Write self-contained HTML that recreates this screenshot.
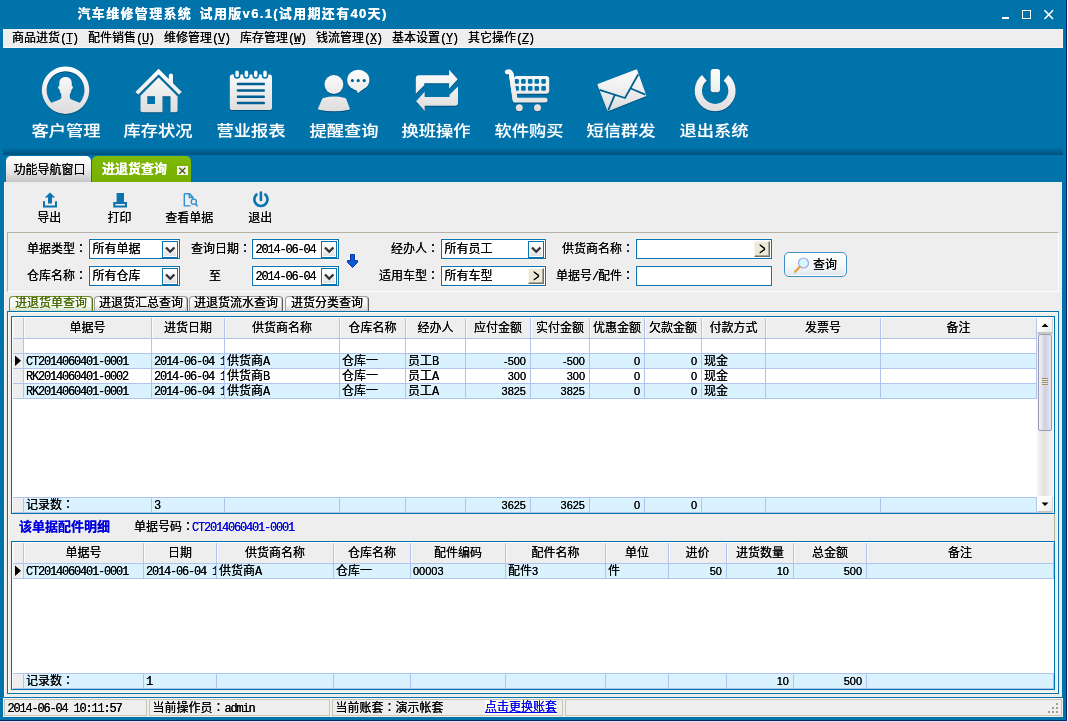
<!DOCTYPE html><html lang="zh-CN"><head><meta charset="utf-8"><title>汽车维修管理系统</title><style>
html,body{margin:0;padding:0}
body{width:1068px;height:722px;position:relative;overflow:hidden;background:#0073ab;will-change:transform;text-shadow:0 0 0 currentColor;
 font-family:"Liberation Sans","Noto Sans CJK SC",sans-serif;font-size:12px;line-height:14px;color:#000}
div,span,a{box-sizing:border-box}
.a{position:absolute;white-space:nowrap}
.l{font-family:"Liberation Mono",monospace;font-size:12px;letter-spacing:-1.2px}
.n{font-family:"Liberation Sans",sans-serif;font-size:11px}
.title{left:77.500px;top:5px;color:#fff;font-weight:bold;font-size:13px;line-height:18px;letter-spacing:1.33px;word-spacing:2.500px}
.menubar{left:3px;top:29px;width:1060px;height:19px;background:#eeeeee;box-shadow:inset -1px -1px 0 #fbf6f2}
.menubar span.mi{position:absolute;top:2px;line-height:14px}
.menubar u{text-decoration:underline}
.tbl{color:#fff;font-weight:500;font-size:15px;line-height:20px;width:104px;text-align:center;top:121px;transform:scaleX(1.15);text-shadow:0 0 1px rgba(210,235,250,.5)}
.shadow{left:3px;top:147px;width:1060px;height:8px;background:linear-gradient(to bottom,rgba(0,20,40,0) 0%,rgba(0,20,40,.06) 25%,rgba(0,20,40,.2) 60%,rgba(0,20,40,.36) 100%)}
.panel{left:4px;top:182px;width:1058px;height:515px;background:#eeeeee;border-left:1px solid #fbf7f3}
.tab1{left:6px;top:156px;width:85px;height:26px;border-radius:5px 5px 0 0;background:linear-gradient(#ffffff 10%,#e6e6e6 60%,#c6c6c6);text-align:center;line-height:29px;padding-left:2px}
.tab2{left:92px;top:156px;width:99px;height:26px;border-radius:5px 5px 0 0;background:linear-gradient(#80ba0a,#7ab600 30%,#78b000);color:#fff;font-weight:bold;font-size:13px;line-height:25px;padding-left:10px}
.tabx{left:177px;top:165.500px;width:10.700px;height:9.500px;background:#f3f3f1}
.sl{top:211px;line-height:14px;text-align:center}
.grp{left:7px;top:232px;width:1052px;height:60px;border:1px solid #fff;border-top-color:#b5b1a3;border-left-color:#b5b1a3}
.lab{line-height:14px;text-align:right}
.tc{font-family:"Liberation Sans","Noto Sans CJK TC",sans-serif}
.inp{height:20px;background:#fff;border:1px solid #0674b0;box-shadow:0 0 0 1px #f8f2ee}
.inp .t{position:absolute;left:2.5px;top:2px;line-height:14px}
.dd{position:absolute;right:1px;top:1px;width:16px;height:17px;border:1px solid #0674b0;box-shadow:inset 0 0 0 1px #fff;background:linear-gradient(#ffffff 15%,#e2e2e2 90%)}
.gt{position:absolute;right:1px;top:1px;width:16px;height:16px;background:#ece9d8;border:1px solid;border-color:#f8f6ee #716f64 #716f64 #f8f6ee;box-shadow:inset -1px -1px 0 #aca899;line-height:13px;text-align:center;font-size:15px;font-family:'Liberation Sans',sans-serif;color:#000}
.btn{left:784px;top:252px;width:63px;height:25px;border:1px solid #3c8ec4;border-radius:5px;background:linear-gradient(#ffffff,#f3f6f8 60%,#dfe8ee);box-shadow:inset 0 0 0 1px #fff}
.itab{top:296px;height:15px;border:1px solid #9c9c9c;border-right-color:#5c5c5c;border-bottom:none;border-radius:4px 4px 0 0;background:linear-gradient(#fff,#f6f6f6 55%,#d4d4d4);line-height:13px;text-align:center;box-shadow:inset -1px 0 0 #c8c8c8}
.itab.on{border-color:#6f9020;border-right-color:#557510;color:#456800;background:linear-gradient(#fff 25%,#f0f5ea 70%,#cfe0c4);box-shadow:inset -1px 0 0 #b5cc90}
.frame{left:7px;top:311px;width:1052px;height:383px;border:1px solid #0073ab;box-shadow:inset 1px 1px 0 0 #fdf9f5,inset -1px -1px 0 0 #fdf9f5;background:#eeeeee}
.grid{border:1px solid #0073ab;background:#fff;overflow:hidden}
.grid .wl{position:absolute;left:0;top:0;right:0;height:1px;background:#fff}
.c{position:absolute;border-right:1px solid #b1c4ef;border-bottom:1px solid #b1c4ef;overflow:hidden;white-space:nowrap;line-height:14px;padding:0 2px}
.h{background:#eeeeee;text-align:center;line-height:20px;padding:0;box-shadow:inset 1px 0 0 #fbfbfb}
.r{text-align:right;padding-right:4px}
.ind{background:#eeeeee}
.alt{background:#d9f2fd}
.f{border-top:1px solid #b1c4ef}
.sb{position:absolute;background:linear-gradient(to right,#f6f6f6,#e2e2e2 45%,#f4f4f4)}
.sbb{position:absolute;left:0;width:16px;height:16px;background:linear-gradient(135deg,#ffffff 20%,#ebebeb);border:1px solid;border-color:#fff #d4d4d4 #c4c4c4 #fff;box-shadow:0 1px 0 #c8c8c8}
.stat{left:3px;top:698px;width:1060px;height:19px;background:#eeeeee;border-top:1px solid #fbf9f5}
.sp{position:absolute;top:0px;height:17px;border:1px solid #c9c4b3;line-height:15px;padding:1px 0 0 2.5px;white-space:nowrap}
</style></head><body>
<div class="a title">汽车维修管理系统 试用版v6.1(试用期还有40天)</div>
<div class="a" style="left:1002px;top:17px;width:7px;height:2px;background:#fff"></div>
<div class="a" style="left:1022px;top:10px;width:9px;height:9px;border:1px solid #fff"></div>
<svg class="a" style="left:1043px;top:9px" width="12" height="11" viewBox="0 0 12 11"><path d="M1.5 1.2 L10 10 M10 1.2 L1.5 10" stroke="#fff" stroke-width="1.6" fill="none"/></svg>
<div class="a menubar">
<span class="mi" style="left:9px">商品进货<span class="l">(<u>T</u>)</span></span>
<span class="mi" style="left:85px">配件销售<span class="l">(<u>U</u>)</span></span>
<span class="mi" style="left:161px">维修管理<span class="l">(<u>V</u>)</span></span>
<span class="mi" style="left:237px">库存管理<span class="l">(<u>W</u>)</span></span>
<span class="mi" style="left:313px">钱流管理<span class="l">(<u>X</u>)</span></span>
<span class="mi" style="left:389px">基本设置<span class="l">(<u>Y</u>)</span></span>
<span class="mi" style="left:465px">其它操作<span class="l">(<u>Z</u>)</span></span>
</div>
<svg class="a" style="left:0;top:60px;filter:drop-shadow(0 1px .7px rgba(0,45,80,.5))" width="780" height="60" viewBox="0 60 780 60"><defs><linearGradient id="g" gradientUnits="userSpaceOnUse" x1="0" y1="68" x2="0" y2="113"><stop offset="0" stop-color="#ffffff"/><stop offset="1" stop-color="#dcdcdc"/></linearGradient></defs><g fill="url(#g)">
<path fill-rule="evenodd" d="M65.550 66.500a23.700 23.700 0 1 0 .01 0z M65.550 71.300a18.900 18.900 0 1 1 -.01 0z"/>
<path d="M65.550 77.100 C61.500 77.100 59.300 79.500 59.300 83.500 V86 c-.9 0 -1.200 .8 -1.100 1.600 c.1 .9 .6 1.800 1.300 2 c.3 2 1 3.800 1.800 5 V97.300 c0 1.200 -.7 1.900 -2.200 2.500 L50.900 102.900 L50.500 104.500 Q52 109.500 58 111.500 Q65.500 113.500 73 111.500 Q79 109.500 80.600 104.500 L80.200 102.900 L72 99.800 c-1.500 -.6 -2.200 -1.300 -2.200 -2.500 V94.600 c.8 -1.200 1.500 -3 1.800 -5 c.7 -.2 1.200 -1.100 1.300 -2 c.1 -.8 -.2 -1.600 -1.100 -1.600 V83.500 C71.800 79.500 69.600 77.100 65.550 77.100 Z"/>
<path d="M158.600 68.800 L168.800 79 V75.500 a2.100 2.100 0 0 1 4.200 0 V83.200 L181.800 92 L179 94.800 L158.600 74.400 L138.200 94.800 L135.400 92 Z"/>
<path fill-rule="evenodd" d="M158.600 77.600 L177.600 96.600 V110.500 a1.800 1.800 0 0 1 -1.800 1.800 H142.300 a1.800 1.800 0 0 1 -1.800 -1.800 V95.700 Z M147.300 96.300 V104 H155 V96.300 Z M162.500 96.300 V112.300 H170.500 V96.300 Z"/>
<rect x="229.800" y="74.400" width="42.200" height="35.700" rx="2.600"/>
<rect x="236.700" y="82.85" width="28.300" height="2.500" rx="1.200" fill="#005f92"/>
<rect x="236.700" y="89.15" width="28.300" height="2.500" rx="1.200" fill="#005f92"/>
<rect x="236.700" y="95.55" width="28.300" height="2.500" rx="1.200" fill="#005f92"/>
<rect x="236.700" y="101.65" width="28.300" height="2.500" rx="1.200" fill="#005f92"/>
<rect x="234.60" y="69.800" width="5" height="8.100" rx="2.500" stroke="#0073ab" stroke-width="1.500"/>
<rect x="243.90" y="69.800" width="5" height="8.100" rx="2.500" stroke="#0073ab" stroke-width="1.500"/>
<rect x="253.20" y="69.800" width="5" height="8.100" rx="2.500" stroke="#0073ab" stroke-width="1.500"/>
<rect x="262.50" y="69.800" width="5" height="8.100" rx="2.500" stroke="#0073ab" stroke-width="1.500"/>
<circle cx="333.900" cy="84.500" r="9.400"/>
<path d="M323.300 97.900 Q334 95 345 97.900 Q346 98.200 346.300 99.200 L349.800 108.600 Q350 109.500 349 109.700 Q334 112.700 318.700 109.700 Q317.700 109.500 318 108.600 L322 99.200 Q322.400 98.200 323.300 97.900 Z"/>
<ellipse cx="358.300" cy="80" rx="11.100" ry="10.300"/><path d="M355.500 89 L358.100 93.300 L365.500 87 Z"/>
<circle cx="352.4" cy="80.600" r="1.550" fill="#005f92"/>
<circle cx="358.2" cy="80.600" r="1.550" fill="#005f92"/>
<circle cx="364.2" cy="80.600" r="1.550" fill="#005f92"/>
<path d="M449.100 69.700 L457.700 79.300 L449.100 88.800 V83.300 H424.300 V85.300 L415.800 93.800 V78.400 a3.200 3.200 0 0 1 3.200 -3.200 H449.100 Z"/>
<path d="M424.700 110.900 L416.100 101.200 L424.700 91.700 V96.900 H449.500 V94.700 L458 86.400 V102.600 a3.200 3.200 0 0 1 -3.200 3.200 H424.700 Z"/>
<path d="M507.300 72 C509.600 71.200 511 72.200 511.400 74.900 L515.100 100.200 H545.200" fill="none" stroke="url(#g)" stroke-width="4.800" stroke-linecap="round" stroke-linejoin="round"/>
<rect x="513.900" y="76" width="35.300" height="17.800" rx="3"/>
<rect x="514.3" y="79.1" width="4.600" height="4.600" rx="1.300" fill="#0073ab"/>
<rect x="521.1" y="79.1" width="4.600" height="4.600" rx="1.300" fill="#0073ab"/>
<rect x="527.9" y="79.1" width="4.600" height="4.600" rx="1.300" fill="#0073ab"/>
<rect x="534.5" y="79.1" width="4.600" height="4.600" rx="1.300" fill="#0073ab"/>
<rect x="541.3" y="79.1" width="4.600" height="4.600" rx="1.300" fill="#0073ab"/>
<rect x="514.3" y="86.1" width="4.600" height="4.600" rx="1.300" fill="#0073ab"/>
<rect x="521.1" y="86.1" width="4.600" height="4.600" rx="1.300" fill="#0073ab"/>
<rect x="527.9" y="86.1" width="4.600" height="4.600" rx="1.300" fill="#0073ab"/>
<rect x="534.5" y="86.1" width="4.600" height="4.600" rx="1.300" fill="#0073ab"/>
<rect x="541.3" y="86.1" width="4.600" height="4.600" rx="1.300" fill="#0073ab"/>
<path d="M511.400 74.900 L515.100 100.200" fill="none" stroke="url(#g)" stroke-width="4.800" stroke-linecap="round"/>
<circle cx="519.300" cy="107.700" r="3.500"/><circle cx="537.500" cy="107.700" r="3.500"/>
<path d="M597.800 84.500 L636.600 69.800 L645.900 95.700 L607.900 110.800 Z" stroke="url(#g)" stroke-width="1" stroke-linejoin="round"/>
<path d="M599.500 89.800 L625 98 L638.300 74.300 M608.200 110.300 L614.800 94.900 M645.400 94.700 L630.800 88.500" stroke="#00608f" stroke-width="1.800" fill="none"/>
<path d="M704.350 77.900 A16.800 16.800 0 1 0 725.950 77.900" fill="none" stroke="url(#g)" stroke-width="7.300"/>
<rect x="710.650" y="69" width="9.350" height="23.200" rx="2.800"/>
</g></svg>
<div class="a tbl" style="left:13.5px">客户管理</div>
<div class="a tbl" style="left:106.2px">库存状况</div>
<div class="a tbl" style="left:198.6px">营业报表</div>
<div class="a tbl" style="left:291.7px">提醒查询</div>
<div class="a tbl" style="left:384.4px">换班操作</div>
<div class="a tbl" style="left:477.1px">软件购买</div>
<div class="a tbl" style="left:569.4px">短信群发</div>
<div class="a tbl" style="left:662.1px">退出系统</div>
<div class="a shadow"></div>
<div class="a tab1">功能导航窗口</div>
<div class="a tab2">进退货查询</div>
<div class="a tabx"><svg width="11" height="10" viewBox="0 0 11 10" style="display:block"><path d="M2.300 1.800 L8.400 7.700 M8.400 1.800 L2.300 7.700" stroke="#4c6a0c" stroke-width="1.500"/></svg></div>
<div class="a panel"></div>
<svg class="a" style="left:40px;top:190px" width="240" height="20" viewBox="40 190 240 20"><g fill="#0a73b0">
<path d="M50 192.500 L55.200 197.600 H52 V203.500 H48 V197.600 H44.800 Z"/><path d="M43 201.300 H45 V205.500 H55 V201.300 H57 V207.500 H43 Z"/>
<rect x="116.600" y="193" width="7.400" height="9"/><path fill-rule="evenodd" d="M113.200 202 H127 V207.500 H113.200 Z M115.400 203.900 V205.400 H125 V203.900 Z"/>
</g><path d="M184.300 193.800 H189.500 L193 197.300 V199 M184.300 193.800 V205.900 H190.500 M189.300 194 V197.500 H193" fill="none" stroke="#2f8fd0" stroke-width="1.400"/>
<circle cx="193.800" cy="201.800" r="2.600" fill="none" stroke="#2f8fd0" stroke-width="1.300"/><path d="M195.600 203.800 L197.500 206.400" stroke="#2f8fd0" stroke-width="1.600"/>
<path d="M256.500 194.500 A6.600 6.600 0 1 0 265.300 194.500" fill="none" stroke="#0a73b0" stroke-width="2.600" stroke-linecap="round"/><path d="M260.900 192.600 V200" stroke="#0a73b0" stroke-width="2.600" stroke-linecap="round"/>
</svg>
<div class="a sl" style="left:9.2px;width:80px">导出</div>
<div class="a sl" style="left:79.5px;width:80px">打印</div>
<div class="a sl" style="left:149.3px;width:80px">查看单据</div>
<div class="a sl" style="left:220.2px;width:80px">退出</div>
<div class="a grp"></div>
<div class="a lab" style="left:-33px;width:120px;top:242px">单据类型<span class="tc" lang="zh-TW">：</span></div>
<div class="a lab" style="left:-33px;width:120px;top:269px">仓库名称<span class="tc" lang="zh-TW">：</span></div>
<div class="a lab" style="left:131px;width:120px;top:242px">查询日期<span class="tc" lang="zh-TW">：</span></div>
<div class="a" style="left:209px;top:269px;line-height:14px">至</div>
<div class="a lab" style="left:319px;width:120px;top:242px">经办人<span class="tc" lang="zh-TW">：</span></div>
<div class="a lab" style="left:319px;width:120px;top:269px">适用车型<span class="tc" lang="zh-TW">：</span></div>
<div class="a lab" style="left:514px;width:120px;top:242px">供货商名称<span class="tc" lang="zh-TW">：</span></div>
<div class="a lab" style="left:514px;width:120px;top:269px">单据号<span class="l">/</span>配件<span class="tc" lang="zh-TW">：</span></div>
<div class="a inp" style="left:89px;top:239px;width:91px"><span class="t">所有单据</span><span class="dd"><svg width="14" height="15" viewBox="0 0 14 15" style="display:block"><path d="M3 5.500 L7.200 9.700 L11.400 5.500" fill="none" stroke="#303030" stroke-width="2.300"/></svg></span></div>
<div class="a inp" style="left:89px;top:266px;width:91px"><span class="t">所有仓库</span><span class="dd"><svg width="14" height="15" viewBox="0 0 14 15" style="display:block"><path d="M3 5.500 L7.200 9.700 L11.400 5.500" fill="none" stroke="#303030" stroke-width="2.300"/></svg></span></div>
<div class="a inp" style="left:252px;top:239px;width:87px"><span class="t"><span class="l">2014-06-04</span></span><span class="dd"><svg width="14" height="15" viewBox="0 0 14 15" style="display:block"><path d="M3 5.500 L7.200 9.700 L11.400 5.500" fill="none" stroke="#303030" stroke-width="2.300"/></svg></span></div>
<div class="a inp" style="left:252px;top:266px;width:87px"><span class="t"><span class="l">2014-06-04</span></span><span class="dd"><svg width="14" height="15" viewBox="0 0 14 15" style="display:block"><path d="M3 5.500 L7.200 9.700 L11.400 5.500" fill="none" stroke="#303030" stroke-width="2.300"/></svg></span></div>
<div class="a inp" style="left:441px;top:239px;width:105px"><span class="t">所有员工</span><span class="dd"><svg width="14" height="15" viewBox="0 0 14 15" style="display:block"><path d="M3 5.500 L7.200 9.700 L11.400 5.500" fill="none" stroke="#303030" stroke-width="2.300"/></svg></span></div>
<div class="a inp" style="left:441px;top:266px;width:105px"><span class="t">所有车型</span><span class="gt"><span style="display:inline-block;transform:scale(.72,1.25)">&gt;</span></span></div>
<div class="a inp" style="left:636px;top:239px;width:136px"><span class="gt"><span style="display:inline-block;transform:scale(.72,1.25)">&gt;</span></span></div>
<div class="a inp" style="left:636px;top:266px;width:136px"></div>
<svg class="a" style="left:346px;top:253px" width="13" height="16" viewBox="0 0 13 16"><path d="M4.500 1.400 H8.500 V7.600 H11.600 V9.200 L6.500 14.600 L1.400 9.200 V7.600 H4.500 Z" fill="#fff" stroke="#fbf8f4" stroke-width="2.600" stroke-linejoin="round"/><path d="M4.500 1.400 H8.500 V7.600 H11.600 V9.200 L6.500 14.600 L1.400 9.200 V7.600 H4.500 Z" fill="#0b5cd4" stroke="#0a2fa4" stroke-width="1"/></svg>
<div class="a btn"><svg class="a" style="left:8px;top:3px" width="18" height="18" viewBox="0 0 18 18"><circle cx="10.500" cy="7" r="5" fill="#d2f7fd" stroke="#a9a6e6" stroke-width="1.200"/><path d="M6.800 10.800 L2.200 15.800" stroke="#e3a23c" stroke-width="2.200" stroke-linecap="round"/></svg><span class="a" style="left:28px;top:5px;line-height:14px">查询</span></div>
<div class="a itab on" style="left:9px;width:84px">进退货单查询</div>
<div class="a itab" style="left:94px;width:94px">进退货汇总查询</div>
<div class="a itab" style="left:189px;width:94px">进退货流水查询</div>
<div class="a itab" style="left:285px;width:84px">进货分类查询</div>
<div class="a frame"></div>
<div class="a grid" style="left:11px;top:316px;width:1044px;height:198px"><div class="wl"></div><div class="wl" style="width:1px;height:auto;bottom:0;right:auto"></div><div class="c h" style="left:1px;top:1px;width:11px;height:21px"></div><div class="c h" style="left:12px;top:1px;width:128px;height:21px">单据号</div><div class="c h" style="left:140px;top:1px;width:73px;height:21px">进货日期</div><div class="c h" style="left:213px;top:1px;width:115px;height:21px">供货商名称</div><div class="c h" style="left:328px;top:1px;width:66px;height:21px">仓库名称</div><div class="c h" style="left:394px;top:1px;width:60px;height:21px">经办人</div><div class="c h" style="left:454px;top:1px;width:65px;height:21px">应付金额</div><div class="c h" style="left:519px;top:1px;width:59px;height:21px">实付金额</div><div class="c h" style="left:578px;top:1px;width:55px;height:21px">优惠金额</div><div class="c h" style="left:633px;top:1px;width:57px;height:21px">欠款金额</div><div class="c h" style="left:690px;top:1px;width:64px;height:21px">付款方式</div><div class="c h" style="left:754px;top:1px;width:115px;height:21px">发票号</div><div class="c h" style="left:869px;top:1px;width:156px;height:21px">备注</div><div class="c ind" style="left:1px;top:22px;width:11px;height:15px"></div><div class="c " style="left:12px;top:22px;width:128px;height:15px"></div><div class="c " style="left:140px;top:22px;width:73px;height:15px"></div><div class="c " style="left:213px;top:22px;width:115px;height:15px"></div><div class="c " style="left:328px;top:22px;width:66px;height:15px"></div><div class="c " style="left:394px;top:22px;width:60px;height:15px"></div><div class="c " style="left:454px;top:22px;width:65px;height:15px"></div><div class="c " style="left:519px;top:22px;width:59px;height:15px"></div><div class="c " style="left:578px;top:22px;width:55px;height:15px"></div><div class="c " style="left:633px;top:22px;width:57px;height:15px"></div><div class="c " style="left:690px;top:22px;width:64px;height:15px"></div><div class="c " style="left:754px;top:22px;width:115px;height:15px"></div><div class="c " style="left:869px;top:22px;width:156px;height:15px"></div><div class="c ind" style="left:1px;top:37px;width:11px;height:15px"><svg width="9" height="13" viewBox="0 0 9 13" style="display:block;margin:0 0 0 -1px"><path d="M1 1.500 L7 6.800 L1 12 Z" fill="#000"/></svg></div><div class="c  alt" style="left:12px;top:37px;width:128px;height:15px"><span class="l">CT2014060401-0001</span></div><div class="c  alt" style="left:140px;top:37px;width:73px;height:15px"><span class="l">2014-06-04 1</span></div><div class="c  alt" style="left:213px;top:37px;width:115px;height:15px">供货商<span class="l">A</span></div><div class="c  alt" style="left:328px;top:37px;width:66px;height:15px">仓库一</div><div class="c  alt" style="left:394px;top:37px;width:60px;height:15px">员工<span class="l">B</span></div><div class="c r alt" style="left:454px;top:37px;width:65px;height:15px"><span class="n">-500</span></div><div class="c r alt" style="left:519px;top:37px;width:59px;height:15px"><span class="n">-500</span></div><div class="c r alt" style="left:578px;top:37px;width:55px;height:15px"><span class="n">0</span></div><div class="c r alt" style="left:633px;top:37px;width:57px;height:15px"><span class="n">0</span></div><div class="c  alt" style="left:690px;top:37px;width:64px;height:15px">现金</div><div class="c  alt" style="left:754px;top:37px;width:115px;height:15px"></div><div class="c  alt" style="left:869px;top:37px;width:156px;height:15px"></div><div class="c ind" style="left:1px;top:52px;width:11px;height:15px"></div><div class="c " style="left:12px;top:52px;width:128px;height:15px"><span class="l">RK2014060401-0002</span></div><div class="c " style="left:140px;top:52px;width:73px;height:15px"><span class="l">2014-06-04 1</span></div><div class="c " style="left:213px;top:52px;width:115px;height:15px">供货商<span class="l">B</span></div><div class="c " style="left:328px;top:52px;width:66px;height:15px">仓库一</div><div class="c " style="left:394px;top:52px;width:60px;height:15px">员工<span class="l">A</span></div><div class="c r" style="left:454px;top:52px;width:65px;height:15px"><span class="n">300</span></div><div class="c r" style="left:519px;top:52px;width:59px;height:15px"><span class="n">300</span></div><div class="c r" style="left:578px;top:52px;width:55px;height:15px"><span class="n">0</span></div><div class="c r" style="left:633px;top:52px;width:57px;height:15px"><span class="n">0</span></div><div class="c " style="left:690px;top:52px;width:64px;height:15px">现金</div><div class="c " style="left:754px;top:52px;width:115px;height:15px"></div><div class="c " style="left:869px;top:52px;width:156px;height:15px"></div><div class="c ind" style="left:1px;top:67px;width:11px;height:15px"></div><div class="c  alt" style="left:12px;top:67px;width:128px;height:15px"><span class="l">RK2014060401-0001</span></div><div class="c  alt" style="left:140px;top:67px;width:73px;height:15px"><span class="l">2014-06-04 1</span></div><div class="c  alt" style="left:213px;top:67px;width:115px;height:15px">供货商<span class="l">A</span></div><div class="c  alt" style="left:328px;top:67px;width:66px;height:15px">仓库一</div><div class="c  alt" style="left:394px;top:67px;width:60px;height:15px">员工<span class="l">A</span></div><div class="c r alt" style="left:454px;top:67px;width:65px;height:15px"><span class="n">3825</span></div><div class="c r alt" style="left:519px;top:67px;width:59px;height:15px"><span class="n">3825</span></div><div class="c r alt" style="left:578px;top:67px;width:55px;height:15px"><span class="n">0</span></div><div class="c r alt" style="left:633px;top:67px;width:57px;height:15px"><span class="n">0</span></div><div class="c  alt" style="left:690px;top:67px;width:64px;height:15px">现金</div><div class="c  alt" style="left:754px;top:67px;width:115px;height:15px"></div><div class="c  alt" style="left:869px;top:67px;width:156px;height:15px"></div><div class="c ind f" style="left:1px;top:180px;width:11px;height:16px"></div><div class="c  alt f" style="left:12px;top:180px;width:128px;height:16px">记录数<span class="tc" lang="zh-TW">：</span></div><div class="c  alt f" style="left:140px;top:180px;width:73px;height:16px"><span class="l">3</span></div><div class="c  alt f" style="left:213px;top:180px;width:115px;height:16px"></div><div class="c  alt f" style="left:328px;top:180px;width:66px;height:16px"></div><div class="c  alt f" style="left:394px;top:180px;width:60px;height:16px"></div><div class="c r alt f" style="left:454px;top:180px;width:65px;height:16px"><span class="n">3625</span></div><div class="c r alt f" style="left:519px;top:180px;width:59px;height:16px"><span class="n">3625</span></div><div class="c r alt f" style="left:578px;top:180px;width:55px;height:16px"><span class="n">0</span></div><div class="c r alt f" style="left:633px;top:180px;width:57px;height:16px"><span class="n">0</span></div><div class="c  alt f" style="left:690px;top:180px;width:64px;height:16px"></div><div class="c  alt f" style="left:754px;top:180px;width:115px;height:16px"></div><div class="c  alt f" style="left:869px;top:180px;width:156px;height:16px"></div><div class="sb" style="left:1025px;top:0;width:16px;height:196px"><div class="sbb" style="top:0"><svg width="14" height="14" viewBox="0 0 14 14" style="display:block"><path d="M3.500 9 L7 5.500 L10.500 9 Z" fill="#000"/></svg></div><div style="position:absolute;left:1px;top:17px;width:14px;height:97px;border:1px solid #9a9bb0;border-radius:2px;background:linear-gradient(to right,#f4f4fa,#cfcfe0 50%,#e6e6f0)"></div><div style="position:absolute;left:5px;top:61px;width:6px;height:8px;background:repeating-linear-gradient(#9c8f73 0 1px,#e8e4d8 1px 2px)"></div><div class="sbb" style="top:179px"><svg width="14" height="14" viewBox="0 0 14 14" style="display:block"><path d="M3.500 5.500 L7 9 L10.500 5.500 Z" fill="#000"/></svg></div></div></div>
<div class="a" style="left:11px;top:514px;width:1044px;height:27px;background:#eeeeee;border-right:1px solid #b5b1a3"></div>
<div class="a" style="left:19px;top:520px;line-height:14px;color:#0000e0;font-weight:bold;font-size:13px">该单据配件明细</div>
<div class="a" style="left:134px;top:520px;line-height:14px">单据号码<span class="tc" lang="zh-TW">：</span><span style="color:#0000e0;margin-left:-2px"><span class="l">CT2014060401-0001</span></span></div>
<div class="a grid" style="left:11px;top:541px;width:1044px;height:149px"><div class="wl"></div><div class="wl" style="width:1px;height:auto;bottom:0;right:auto"></div><div class="c h" style="left:1px;top:1px;width:11px;height:21px"></div><div class="c h" style="left:12px;top:1px;width:120px;height:21px">单据号</div><div class="c h" style="left:132px;top:1px;width:73px;height:21px">日期</div><div class="c h" style="left:205px;top:1px;width:117px;height:21px">供货商名称</div><div class="c h" style="left:322px;top:1px;width:77px;height:21px">仓库名称</div><div class="c h" style="left:399px;top:1px;width:95px;height:21px">配件编码</div><div class="c h" style="left:494px;top:1px;width:100px;height:21px">配件名称</div><div class="c h" style="left:594px;top:1px;width:63px;height:21px">单位</div><div class="c h" style="left:657px;top:1px;width:58px;height:21px">进价</div><div class="c h" style="left:715px;top:1px;width:67px;height:21px">进货数量</div><div class="c h" style="left:782px;top:1px;width:73px;height:21px">总金额</div><div class="c h" style="left:855px;top:1px;width:187px;height:21px">备注</div><div class="c ind" style="left:1px;top:22px;width:11px;height:15px"><svg width="9" height="13" viewBox="0 0 9 13" style="display:block;margin:0 0 0 -1px"><path d="M1 1.500 L7 6.800 L1 12 Z" fill="#000"/></svg></div><div class="c  alt" style="left:12px;top:22px;width:120px;height:15px"><span class="l">CT2014060401-0001</span></div><div class="c  alt" style="left:132px;top:22px;width:73px;height:15px"><span class="l">2014-06-04 1</span></div><div class="c  alt" style="left:205px;top:22px;width:117px;height:15px">供货商<span class="l">A</span></div><div class="c  alt" style="left:322px;top:22px;width:77px;height:15px">仓库一</div><div class="c  alt" style="left:399px;top:22px;width:95px;height:15px"><span class="n">00003</span></div><div class="c  alt" style="left:494px;top:22px;width:100px;height:15px">配件<span class="n">3</span></div><div class="c  alt" style="left:594px;top:22px;width:63px;height:15px">件</div><div class="c r alt" style="left:657px;top:22px;width:58px;height:15px"><span class="n">50</span></div><div class="c r alt" style="left:715px;top:22px;width:67px;height:15px"><span class="n">10</span></div><div class="c r alt" style="left:782px;top:22px;width:73px;height:15px"><span class="n">500</span></div><div class="c  alt" style="left:855px;top:22px;width:187px;height:15px"></div><div class="c ind f" style="left:1px;top:131px;width:11px;height:16px"></div><div class="c  alt f" style="left:12px;top:131px;width:120px;height:16px">记录数<span class="tc" lang="zh-TW">：</span></div><div class="c  alt f" style="left:132px;top:131px;width:73px;height:16px"><span class="l">1</span></div><div class="c  alt f" style="left:205px;top:131px;width:117px;height:16px"></div><div class="c  alt f" style="left:322px;top:131px;width:77px;height:16px"></div><div class="c  alt f" style="left:399px;top:131px;width:95px;height:16px"></div><div class="c  alt f" style="left:494px;top:131px;width:100px;height:16px"></div><div class="c  alt f" style="left:594px;top:131px;width:63px;height:16px"></div><div class="c  alt f" style="left:657px;top:131px;width:58px;height:16px"></div><div class="c r alt f" style="left:715px;top:131px;width:67px;height:16px"><span class="n">10</span></div><div class="c r alt f" style="left:782px;top:131px;width:73px;height:16px"><span class="n">500</span></div><div class="c  alt f" style="left:855px;top:131px;width:187px;height:16px"></div></div>
<div class="a" style="left:4px;top:697px;width:1058px;height:1px;background:#0073ab"></div>
<div class="a stat">
<div class="sp" style="left:1px;width:143px"><span class="l">2014-06-04 10:11:57</span></div>
<div class="sp" style="left:146px;width:181px">当前操作员<span class="tc" lang="zh-TW">：</span><span class="l">admin</span></div>
<div class="sp" style="left:329px;width:231px">当前账套<span class="tc" lang="zh-TW">：</span>演示帐套<a style="position:absolute;left:152px;top:0;color:#0000ee;text-decoration:underline;background:#ffffec">点击更换账套</a></div>
<div class="sp" style="left:562px;width:497px"><svg style="position:absolute;right:2px;bottom:1px" width="11" height="11" viewBox="0 0 11 11"><g fill="#a39f8b"><rect x="8" y="0" width="2" height="2"/><rect x="4" y="4" width="2" height="2"/><rect x="8" y="4" width="2" height="2"/><rect x="0" y="8" width="2" height="2"/><rect x="4" y="8" width="2" height="2"/><rect x="8" y="8" width="2" height="2"/></g></svg></div>
</div>
<div class="a" style="left:1066px;top:0;width:1px;height:722px;background:#0c2266"></div><div class="a" style="left:1067px;top:0;width:1px;height:722px;background:#f6f7fb"></div>
<div class="a" style="left:0;top:720px;width:1067px;height:1px;background:#0c2266"></div><div class="a" style="left:0;top:721px;width:1068px;height:1px;background:#dfe4ec"></div>
</body></html>
